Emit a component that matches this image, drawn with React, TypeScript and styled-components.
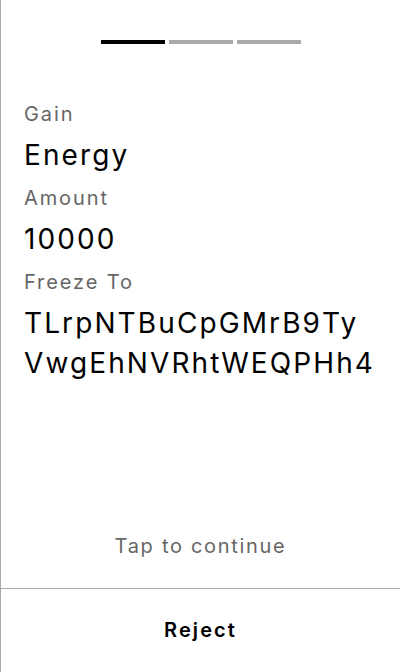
import React from "react";
import styled, { createGlobalStyle } from "styled-components";

const Global = createGlobalStyle`
  html, body, #root { height: 100%; margin: 0; padding: 0; }
  body { background: #fff; font-family: Inter, "Noto Sans", sans-serif; }
  * { box-sizing: border-box; }
`;

const Screen = styled.div`
  height: 100%;
  display: flex;
  flex-direction: column;
  border-left: 1px solid #aaaaaa;
  background: #fff;
`;

const Progress = styled.div`
  display: flex;
  justify-content: center;
  gap: 4px;
  padding-top: 40px;
`;

const Segment = styled.div<{ $active?: boolean }>`
  width: 64px;
  height: 4px;
  background: ${(p) => (p.$active ? "#000" : "#aaaaaa")};
`;

const Body = styled.div`
  flex: 1;
  display: flex;
  flex-direction: column;
  padding: 56px 23px 0;
`;

const Label = styled.div`
  font-size: 20px;
  line-height: 28px;
  letter-spacing: 1.9px;
  color: #666666;
  margin-bottom: 8px;
`;

const Value = styled.div`
  font-size: 28px;
  line-height: 39.2px;
  letter-spacing: 2.1px;
  color: #000;
  margin-bottom: 9px;
  white-space: nowrap;
`;

const Line = styled.span`
  display: block;
`;

const Hint = styled.div`
  margin-top: auto;
  padding-bottom: 28px;
  text-align: center;
  font-size: 20px;
  line-height: 28px;
  letter-spacing: 1.7px;
  color: #666666;
`;

const Footer = styled.button`
  height: 84px;
  border: none;
  border-top: 1px solid #aaaaaa;
  background: #fff;
  font-family: Inter, "Noto Sans", sans-serif;
  font-size: 20px;
  font-weight: 600;
  letter-spacing: 2.1px;
  color: #000;
  padding: 0 0 2px;
  cursor: pointer;
`;

const address = "TLrpNTBuCpGMrB9TyVwgEhNVRhtWEQPHh4";
const half = Math.ceil(address.length / 2);

export default function App() {
  return (
    <>
      <Global />
      <Screen>
        <Progress>
          <Segment $active />
          <Segment />
          <Segment />
        </Progress>
        <Body>
          <Label>Gain</Label>
          <Value>Energy</Value>
          <Label>Amount</Label>
          <Value>10000</Value>
          <Label>Freeze To</Label>
          <Value>
            <Line>{address.slice(0, half)}</Line>
            <Line>{address.slice(half)}</Line>
          </Value>
          <Hint>Tap to continue</Hint>
        </Body>
        <Footer>Reject</Footer>
      </Screen>
    </>
  );
}
